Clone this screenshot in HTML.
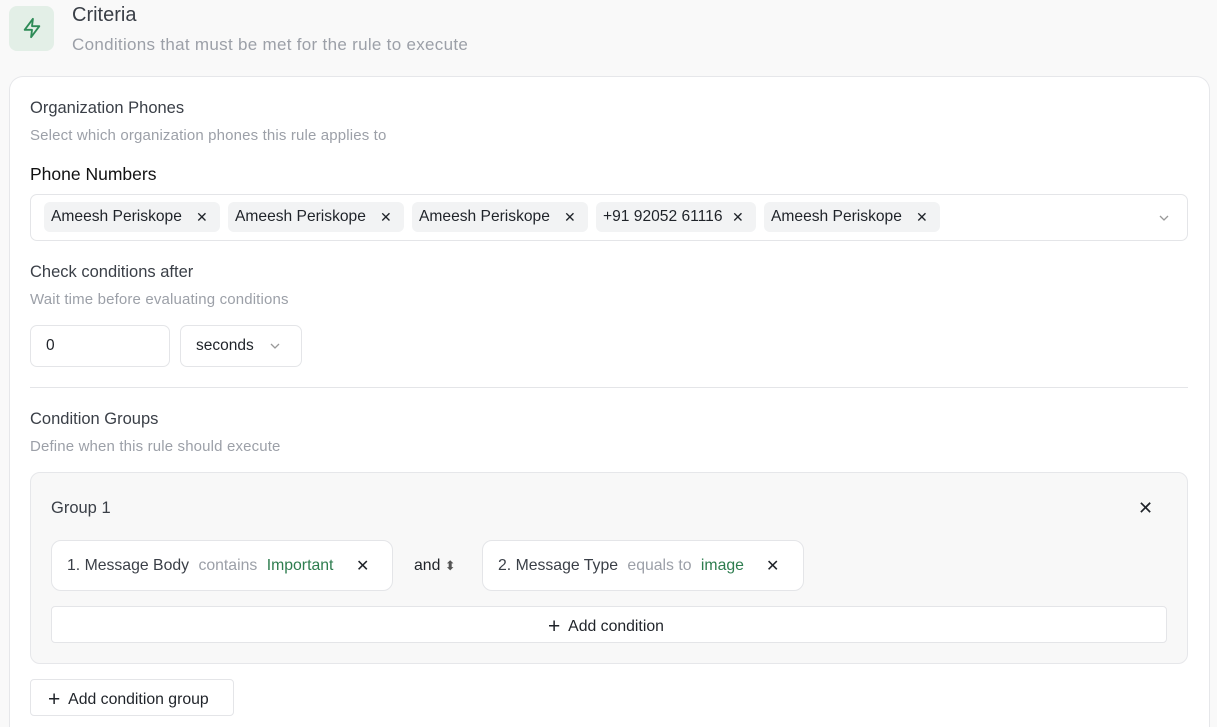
<!DOCTYPE html>
<html style="height:727px;overflow:hidden"><head><meta charset="utf-8"><style>
*{box-sizing:border-box;margin:0;padding:0}
body{width:1217px;height:727px;background:#f9f9f9;font-family:"Liberation Sans",sans-serif;position:relative;overflow:hidden;color:#1f2329}
.a{position:absolute;white-space:nowrap}
.card{position:absolute;left:9px;top:76px;width:1201px;height:651px;background:#fff;border:1px solid #e6e7ea;border-bottom:none;border-radius:14px 14px 0 0}
.h{font-size:16.5px;color:#3a3f47}
.s{font-size:15px;color:#9ca0a8;letter-spacing:0.15px}
.box{position:absolute;border:1px solid #e4e5e8;border-radius:7px;background:#fff}
.tag{position:absolute;top:202px;height:30px;background:#f2f3f4;border-radius:6px;font-size:15.6px;line-height:30px;padding-left:7px;color:#1f2329}
.x{position:absolute;font-size:14px}
</style></head><body>
<div class="a" style="left:9px;top:6px;width:45px;height:45px;background:#e3efe7;border-radius:8px"></div>
<svg class="a" style="left:21px;top:17px" width="22" height="22" viewBox="0 0 24 24" fill="none" stroke="#2e8b57" stroke-width="2" stroke-linejoin="round" stroke-linecap="round"><path d="M13 2L4 14h8l-1 8 9-12h-8l1-8z"/></svg>
<div class="a" style="left:72px;top:4px;font-size:20px;color:#3a3f47">Criteria</div>
<div class="a" style="left:72px;top:35px;font-size:17px;color:#9ca0a8;letter-spacing:0.3px">Conditions that must be met for the rule to execute</div>
<div class="card"></div>
<div class="a h" style="left:30px;top:99px">Organization Phones</div>
<div class="a s" style="left:30px;top:127px">Select which organization phones this rule applies to</div>
<div class="a" style="left:30px;top:164px;font-size:17.5px;color:#111">Phone Numbers</div>
<div class="box" style="left:30px;top:194px;width:1158px;height:47px"></div>
<div class="tag" style="left:44px;width:176px">Ameesh Periskope<span class="x" style="left:152px">✕</span></div>
<div class="tag" style="left:228px;width:176px">Ameesh Periskope<span class="x" style="left:152px">✕</span></div>
<div class="tag" style="left:412px;width:176px">Ameesh Periskope<span class="x" style="left:152px">✕</span></div>
<div class="tag" style="left:596px;width:160px">+91 92052 61116<span class="x" style="left:136px">✕</span></div>
<div class="tag" style="left:764px;width:176px">Ameesh Periskope<span class="x" style="left:152px">✕</span></div>
<svg class="a" style="left:1158px;top:212px" width="12" height="12" viewBox="0 0 12 12" fill="none" stroke="#999" stroke-width="1.3"><path d="M2 4l4 4 4-4"/></svg>
<div class="a h" style="left:30px;top:263px">Check conditions after</div>
<div class="a s" style="left:30px;top:291px">Wait time before evaluating conditions</div>
<div class="box" style="left:30px;top:325px;width:140px;height:42px"></div>
<div class="a" style="left:46px;top:337px;font-size:15.5px">0</div>
<div class="box" style="left:180px;top:325px;width:122px;height:42px"></div>
<div class="a" style="left:196px;top:337px;font-size:15.5px">seconds</div>
<svg class="a" style="left:269px;top:340px" width="12" height="12" viewBox="0 0 12 12" fill="none" stroke="#999" stroke-width="1.3"><path d="M2 4l4 4 4-4"/></svg>
<div class="a" style="left:30px;top:387px;width:1158px;height:1px;background:#e4e5e8"></div>
<div class="a h" style="left:30px;top:410px">Condition Groups</div>
<div class="a s" style="left:30px;top:438px">Define when this rule should execute</div>
<div class="a" style="left:30px;top:472px;width:1158px;height:192px;background:#f8f8f8;border:1px solid #e6e7ea;border-radius:10px"></div>
<div class="a h" style="left:51px;top:499px">Group 1</div>
<div class="a" style="left:1138px;top:498px;font-size:18px">✕</div>
<div class="box" style="left:51px;top:540px;width:342px;height:51px;border-radius:10px"></div>
<div class="a" style="left:67px;top:557px;font-size:15.8px;color:#3a3f47">1. Message Body <span style="color:#9ca0a8;margin-left:5px">contains</span> <span style="color:#2e7d4f;margin-left:5px">Important</span></div>
<div class="a" style="left:356px;top:556px;font-size:16px">✕</div>
<div class="a" style="left:414px;top:557px;font-size:15.8px">and <span style="font-size:13px;color:#555">⬍</span></div>
<div class="box" style="left:482px;top:540px;width:322px;height:51px;border-radius:10px"></div>
<div class="a" style="left:498px;top:557px;font-size:15.8px;color:#3a3f47">2. Message Type <span style="color:#9ca0a8;margin-left:5px">equals to</span> <span style="color:#2e7d4f;margin-left:5px">image</span></div>
<div class="a" style="left:766px;top:556px;font-size:16px">✕</div>
<div class="box" style="left:51px;top:606px;width:1116px;height:37px;border-radius:4px"></div>
<div class="a" style="left:548px;top:615px;font-size:15.8px"><span style="font-size:21px;vertical-align:-2px">+</span>&nbsp; Add condition</div>
<div class="box" style="left:30px;top:679px;width:204px;height:37px;border-radius:4px"></div>
<div class="a" style="left:48px;top:688px;font-size:15.8px"><span style="font-size:21px;vertical-align:-2px">+</span>&nbsp; Add condition group</div>
</body></html>
